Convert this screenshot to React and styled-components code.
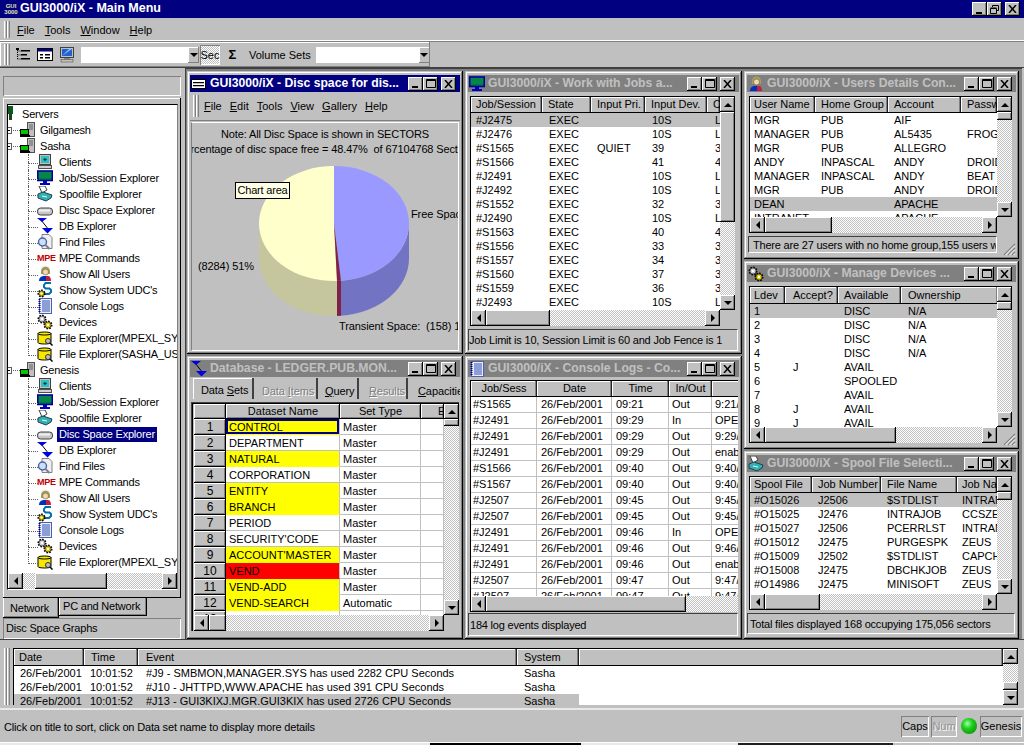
import React from 'react';
import styled, { createGlobalStyle } from 'styled-components';

const GlobalStyle = createGlobalStyle`
  html, body { margin: 0; padding: 0; background: #c0c0c0; }
  body { font-family: "Liberation Sans", Arial, sans-serif; font-size: 11px; color: #000; }
  * { box-sizing: border-box; }
`;

const raised = `box-shadow: inset -1px -1px #000, inset 1px 1px #fff, inset -2px -2px #808080;`;
const checker = `background: repeating-conic-gradient(#c0c0c0 0 25%, #fff 0 50%) 0 0 / 2px 2px;`;

/* ---------- icons ---------- */

function Gear({ x, y, r, fill }) {
  return (
    <g>
      <circle cx={x} cy={y} r={r} fill="none" stroke="#000" strokeWidth="2" strokeDasharray="1.5 1.2" />
      <circle cx={x} cy={y} r={r - 0.4} fill={fill} stroke="#000" strokeWidth="0.6" />
      <circle cx={x} cy={y} r={r / 3} fill="#fff" />
    </g>
  );
}

const drawings = {
  root: (
    <g>
      <rect x="0" y="0" width="5" height="8" fill="#0a5a20" />
      <rect x="1" y="8" width="3" height="6" fill="#204020" />
    </g>
  ),
  server: (
    <g>
      <rect x="7.5" y="0.5" width="7" height="14" fill="#c0c0c0" stroke="#505050" />
      <path d="M9 3h4M9 5h4M9 7h4" stroke="#606060" />
      <rect x="0.5" y="7.5" width="8" height="5" fill="#00c800" stroke="#000" />
      <rect x="0" y="13" width="10" height="2" fill="#000" />
    </g>
  ),
  clients: (
    <g>
      <rect x="2.5" y="0.5" width="11" height="10" fill="#c0c0c0" stroke="#404040" />
      <rect x="4" y="2" width="8" height="7" fill="#30c0c0" />
      <path d="M8 4l2 1.500-2 1.500-2-1.500z" fill="#004040" />
      <rect x="1.500" y="11.500" width="13" height="3" fill="#d0d0d0" stroke="#505050" />
    </g>
  ),
  job: (
    <g>
      <rect x="0.800" y="1" width="14.400" height="9.500" fill="#007840" stroke="#0000a0" strokeWidth="1.600" />
      <path d="M1.500 3h13M1.500 5h13M1.500 7h13" stroke="#10a060" strokeWidth="0.700" />
      <rect x="6" y="11" width="4" height="2" fill="#0000c0" />
      <rect x="3" y="13" width="10" height="2" fill="#0000c0" />
    </g>
  ),
  spool: (
    <g>
      <path d="M2 0h6l2 4-5 3z" fill="#fff" stroke="#404040" />
      <path d="M1 8l5-2 9 3-1 3-5 3-8-3z" fill="#30b0b0" stroke="#204050" />
      <path d="M5 10l5 1" stroke="#e0ffff" />
    </g>
  ),
  disc: (
    <g>
      <rect x="0.500" y="6" width="15" height="7" rx="3" fill="#c8c8c8" stroke="#404040" />
      <rect x="2" y="7.500" width="11" height="2" fill="#f0f0f0" />
    </g>
  ),
  db: (
    <g>
      <path d="M4 2l8 10" stroke="#000" />
      <polygon points="0,0 10,0 5,4" fill="#0000e0" />
      <polygon points="5,10 16,10 10.500,15.500" fill="#0000e0" />
    </g>
  ),
  find: (
    <g>
      <path d="M5 0.500h7l3 3v11H5z" fill="#f0f0f0" stroke="#808080" />
      <circle cx="5.500" cy="8" r="4" fill="#c8e0f8" stroke="#5060a0" strokeWidth="1.400" />
      <path d="M8.500 11l4 4" stroke="#808090" strokeWidth="2" />
    </g>
  ),
  users: (
    <g>
      <path d="M4 5a4.500 4.500 0 1 1 9 0v3H4z" fill="#a8a060" />
      <circle cx="8.500" cy="6" r="3" fill="#f0d8b0" stroke="#504020" strokeWidth="0.500" />
      <path d="M2 15c0-4 3-5 5-5h3l-1 5z" fill="#0030c0" />
      <path d="M9 10h2c2 0 3 2 3 5H9z" fill="#c02040" />
    </g>
  ),
  udc: (
    <g>
      <path d="M14 1H8.500L7 3v2l1.500 1.500h4L14 8v2l-2 2H7" fill="none" stroke="#0070b0" strokeWidth="2" />
      <Gear x={4.500} y={11.500} r={3} fill="#e8d000" />
    </g>
  ),
  logs: (
    <g>
      <rect x="2.500" y="0.500" width="12" height="15" fill="#e8ecff" stroke="#5060a0" />
      <path d="M5 3h8M5 5h8M5 7h8M5 9h8M5 11h8M5 13h8" stroke="#3050b0" />
      <path d="M2.500 1v14" stroke="#000080" strokeDasharray="1 1" strokeWidth="2" />
    </g>
  ),
  devices: (
    <g>
      <Gear x={5} y={5} r={3.500} fill="#d0d0d0" />
      <Gear x={11} y={11} r={3.500} fill="#e8c800" />
    </g>
  ),
  file: (
    <g>
      <path d="M1 3.500c0-2 13-2 13 0v9c0 2-13 2-13 0z" fill="#f8e800" stroke="#000" />
      <path d="M1 3.500c0 2 13 2 13 0" fill="none" stroke="#000" />
      <circle cx="11" cy="11" r="2.500" fill="#c0c0c0" stroke="#303030" />
      <path d="M13 13l2.500 2.500" stroke="#000" strokeWidth="1.500" />
    </g>
  ),
  form: (
    <g>
      <rect x="0.500" y="1.500" width="15" height="12" fill="#fff" stroke="#000" />
      <rect x="1" y="2" width="14" height="2.500" fill="#000080" />
      <path d="M3 7h3v1.500H3zM3 10h3v1.500H3zM8 7h5v1.500H8zM8 10h5v1.500H8z" fill="#000" />
    </g>
  ),
  monitor: (
    <g>
      <rect x="1.500" y="0.500" width="13" height="10" fill="#c0c0c0" stroke="#404040" />
      <rect x="3" y="2" width="10" height="7" fill="#2060d0" />
      <path d="M3 9l7-7h3z" fill="#80c0ff" />
      <rect x="5" y="11" width="6" height="1.500" fill="#808080" />
      <rect x="2" y="12.500" width="12" height="2.500" fill="#c0c0c0" stroke="#404040" strokeWidth="0.500" />
    </g>
  ),
  treeview: (
    <g>
      <path d="M2.500 1v12M2.500 4h3M2.500 8h3M2.500 12h3" stroke="#000" strokeDasharray="1 1" fill="none" />
      <path d="M1 1h3v2H1zM6 3h9v1.500H6zM6 7h6v1.500H6zM6 11h9v1.500H6z" fill="#000" />
    </g>
  ),
  sysmenu: (
    <g>
      <rect x="0.500" y="3.500" width="14" height="9" fill="#fff" stroke="#000" />
      <path d="M2 6h11v1.200H2zM2 9h11v1.200H2z" fill="#000" />
    </g>
  ),
};

const IconSvg = styled.svg`
  display: block;
  flex: none;
`;

function Icon({ name, size = 16 }) {
  return (
    <IconSvg width={size} height={size} viewBox="0 0 16 16">
      {drawings[name]}
    </IconSvg>
  );
}

const MpeMark = styled.span`
  flex: none;
  width: 16px;
  font-size: 9px;
  font-weight: bold;
  color: #c00000;
  text-align: center;
  letter-spacing: -0.2px;
`;

/* ---------- main chrome ---------- */

const Screen = styled.div`
  width: 1024px;
  height: 745px;
  overflow: hidden;
  display: flex;
  flex-direction: column;
  background: #c0c0c0;
`;

const MainTitle = styled.div`
  height: 18px;
  flex: none;
  display: flex;
  align-items: center;
  background: #000080;
  color: #fff;
  font-size: 12.5px;
  font-weight: bold;
  padding-left: 2px;
`;

const LogoMark = styled.span`
  width: 18px;
  font-size: 6px;
  line-height: 6px;
  color: #e8e8b0;
  text-align: center;
  font-weight: bold;
`;

const TitleText = styled.span`
  flex: 1;
  min-width: 0;
  padding-bottom: 2px;
  white-space: nowrap;
  overflow: hidden;
`;

const Controls = styled.div`
  display: flex;
  flex: none;
  margin-right: 4px;
`;

const CtlButton = styled.button`
  width: 15px;
  height: 14px;
  padding: 0;
  border: 0;
  margin-left: ${(p) => (p.$close ? '3px' : '0')};
  background: #c0c0c0;
  display: flex;
  align-items: center;
  justify-content: center;
  ${raised}
`;

function WindowControls({ restore }) {
  return (
    <Controls>
      <CtlButton>
        <svg width="9" height="9" viewBox="0 0 9 9"><rect x="1" y="7" width="6" height="2" /></svg>
      </CtlButton>
      <CtlButton>
        {restore ? (
          <svg width="9" height="9" viewBox="0 0 9 9" fill="none" stroke="#000">
            <path d="M2.500 2V.5h6v5H7" />
            <path d="M.5 3.500h6v5h-6z" />
            <path d="M.5 3h6" />
          </svg>
        ) : (
          <svg width="10" height="9" viewBox="0 0 10 9" fill="none" stroke="#000">
            <path d="M.5 .5h9v8h-9z" />
            <path d="M0 1.500h10" />
          </svg>
        )}
      </CtlButton>
      <CtlButton $close>
        <svg width="9" height="8" viewBox="0 0 9 8" stroke="#000" strokeWidth="1.500">
          <path d="M1 0l7 8M8 0L1 8" />
        </svg>
      </CtlButton>
    </Controls>
  );
}

const Grip = styled.span`
  flex: none;
  width: 6px;
  align-self: stretch;
  background: linear-gradient(90deg, #fff 1px, #c0c0c0 1px, #c0c0c0 2px, #808080 2px) 0 0 / 3px 100%;
`;

const MenuBar = styled.div`
  height: 24px;
  flex: none;
  display: flex;
  align-items: center;
  gap: 10px;
  padding: 3px 0 3px 4px;
  border-bottom: 1px solid #808080;
  box-shadow: inset 0 -1px #fff;
`;

const MenuItem = styled.span`
  margin-left: ${(p) => (p.$first ? '-3px' : '0')};
`;

function Menu({ items }) {
  return items.map((label, i) => (
    <MenuItem key={label} $first={i === 0}>
      <u>{label[0]}</u>
      {label.slice(1)}
    </MenuItem>
  ));
}

const ToolRow = styled.div`
  height: 26px;
  flex: none;
  border-bottom: 1px solid #404040;
`;

const Toolbar = styled.div`
  width: 430px;
  height: 25px;
  display: flex;
  align-items: center;
  gap: 5px;
  padding: 2px 0 2px 4px;
  box-shadow: inset -1px -1px #808080, inset 1px 1px #fff;
`;

const ToolIcon = styled.span`
  width: 17px;
`;

const Combo = styled.div`
  width: ${(p) => p.$width}px;
  height: 16px;
  flex: none;
  background: #fff;
  display: flex;
  justify-content: flex-end;
`;

const ComboArrow = styled.span`
  width: 11px;
  background: #c0c0c0;
  display: flex;
  align-items: center;
  justify-content: center;
  box-shadow: inset -1px -1px #808080, inset 1px 1px #fff;
`;

const SecButton = styled.span`
  width: 20px;
  height: 20px;
  margin-left: -4px;
  display: flex;
  align-items: center;
  justify-content: center;
  ${checker}
  box-shadow: inset 1px 1px #808080, inset -1px -1px #fff;
`;

const SigmaMark = styled.span`
  width: 15px;
  font-size: 13px;
  font-weight: bold;
  text-align: center;
`;

const VolumeLabel = styled.span`
  margin-left: 4px;
  white-space: nowrap;
`;

const Triangle = styled.span`
  width: 0;
  height: 0;
  border-style: solid;
  border-color: transparent;
  ${(p) => p.$dir === 'up' && 'border-width: 0 4px 4px; border-bottom-color: #000;'}
  ${(p) => p.$dir === 'down' && 'border-width: 4px 4px 0; border-top-color: #000;'}
  ${(p) => p.$dir === 'left' && 'border-width: 4px 4px 4px 0; border-right-color: #000;'}
  ${(p) => p.$dir === 'right' && 'border-width: 4px 0 4px 4px; border-left-color: #000;'}
`;

/* ---------- scrollbars ---------- */

const VTrack = styled.div`
  display: flex;
  flex-direction: column;
  min-height: 0;
  overflow: hidden;
`;

const HTrack = styled.div`
  display: flex;
  min-width: 0;
  overflow: hidden;
`;

const ScrollBtn = styled.span`
  flex: none;
  width: 15px;
  height: 15px;
  background: #c0c0c0;
  display: flex;
  align-items: center;
  justify-content: center;
  ${raised}
`;

const HScrollBtn = styled(ScrollBtn)`
  height: 100%;
`;

const Checker = styled.div`
  flex: 1;
  min-width: 0;
  min-height: 0;
  ${checker}
`;

const VThumb = styled.div`
  flex: none;
  height: ${(p) => p.$size}px;
  margin-top: ${(p) => p.$before}px;
  background: #c0c0c0;
  ${raised}
`;

const HThumb = styled.div`
  flex: none;
  width: ${(p) => p.$size}px;
  background: #c0c0c0;
  ${raised}
`;

const CheckerGap = styled.div`
  flex: none;
  width: ${(p) => p.$size}px;
  ${checker}
`;

const VBody = styled.div`
  flex: 1;
  min-height: 0;
  display: flex;
  flex-direction: column;
  ${checker}
`;

function VScroll({ before = 0, size }) {
  return (
    <VTrack>
      <ScrollBtn><Triangle $dir="up" /></ScrollBtn>
      <VBody>
        <VThumb $before={before} $size={size} />
      </VBody>
      <ScrollBtn><Triangle $dir="down" /></ScrollBtn>
    </VTrack>
  );
}

function HScroll({ before = 0, size, noEnd }) {
  return (
    <HTrack>
      <HScrollBtn><Triangle $dir="left" /></HScrollBtn>
      {before > 0 && <CheckerGap $size={before} />}
      <HThumb $size={size} />
      <Checker />
      {!noEnd && <HScrollBtn><Triangle $dir="right" /></HScrollBtn>}
    </HTrack>
  );
}

const HScrollHolder = styled.div`
  flex: none;
  height: 16px;
  display: grid;
`;

/* ---------- list views ---------- */

const ListFrame = styled.div`
  flex: 1;
  min-height: 0;
  margin: ${(p) => p.$margin};
  display: grid;
  grid-template-columns: minmax(0, 1fr) ${(p) => (p.$noV ? '' : '15px')};
  grid-template-rows: minmax(0, 1fr) ${(p) => (p.$noH ? '' : '16px')};
  border-top: 1px solid #000;
  border-left: 1px solid #000;
`;

const ListPane = styled.div`
  background: #fff;
  overflow: hidden;
`;

const HeaderRow = styled.div`
  display: grid;
  grid-template-columns: ${(p) => p.$cols};
  height: ${(p) => p.$height}px;
  border-bottom: 1px solid #000;
`;

const HeaderCell = styled.div`
  background: #c0c0c0;
  white-space: nowrap;
  overflow: hidden;
  padding-left: ${(p) => p.$pad}px;
  line-height: ${(p) => p.$height}px;
  text-align: ${(p) => (p.$center ? 'center' : 'left')};
  box-shadow: inset -1px 0 #202020, inset -2px 0 #808080, inset 1px 1px #fff;
`;

const ListRow = styled.div`
  display: grid;
  grid-template-columns: ${(p) => p.$cols};
  height: ${(p) => p.$height}px;
`;

const ListCell = styled.div`
  white-space: nowrap;
  overflow: hidden;
  padding-left: ${(p) => p.$pad}px;
  line-height: ${(p) => p.$height - (p.$lines ? 1 : 0)}px;
  background: ${(p) => (p.$selected ? '#c0c0c0' : 'transparent')};
  ${(p) => p.$lines && 'border-right: 1px solid #c0c0c0; border-bottom: 1px solid #c0c0c0;'}
`;

const CornerFill = styled.div`
  background: #c0c0c0;
`;

function DataList({
  cols,
  rows,
  selected = -1,
  rowH = 14,
  headH = 16,
  lines,
  centerHead,
  v,
  h,
  margin = '4px 4px 0 2px',
}) {
  const template = cols.map((c) => `${c.w}px`).join(' ') + ' minmax(0, 1fr)';
  return (
    <ListFrame $margin={margin} $noV={!v} $noH={!h}>
      <ListPane>
        <HeaderRow $cols={template} $height={headH}>
          {cols.map((c, i) => (
            <HeaderCell
              key={i}
              $height={headH - 1}
              $pad={centerHead ? 0 : c.headPad ?? c.pad ?? 6}
              $center={centerHead}
            >
              {c.title}
            </HeaderCell>
          ))}
          <HeaderCell $height={headH - 1} $pad={0} />
        </HeaderRow>
        {rows.map((row, r) => (
          <ListRow key={r} $cols={template} $height={rowH}>
            {row.map((text, c) => (
              <ListCell
                key={c}
                $height={rowH}
                $pad={cols[c].pad ?? 6}
                $lines={lines}
                $selected={r === selected}
              >
                {text}
              </ListCell>
            ))}
          </ListRow>
        ))}
      </ListPane>
      {v && <VScroll before={v.before} size={v.size} />}
      {h && <HScroll before={h.before} size={h.size} noEnd={h.noEnd} />}
      {h && v && <CornerFill />}
    </ListFrame>
  );
}

const StatusRow = styled.div`
  flex: none;
  margin: ${(p) => p.$margin};
  height: ${(p) => p.$height}px;
  display: flex;
`;

const StatusBox = styled.div`
  flex: 1;
  min-width: 0;
  border-top: 1px solid #404040;
  border-left: 1px solid #404040;
  border-bottom: 1px solid #fff;
  border-right: 1px solid #fff;
  white-space: nowrap;
  overflow: hidden;
  display: flex;
  align-items: center;
  letter-spacing: -0.2px;
  padding-left: ${(p) => p.$pad}px;
`;

const GripSpace = styled.div`
  flex: none;
  width: 19px;
`;

const ResizeGrip = styled.svg`
  position: absolute;
  right: 3px;
  bottom: 3px;
`;

function CornerGrip() {
  return (
    <ResizeGrip width="13" height="13" viewBox="0 0 13 13">
      <path d="M12 1L1 12M12 5l-7 7M12 9l-3 3" stroke="#808080" strokeWidth="1.200" />
      <path d="M12 2.500L2.500 12M12 6.500L6.500 12M12 10.500L10.500 12" stroke="#fff" />
    </ResizeGrip>
  );
}

/* ---------- MDI windows ---------- */

const Mdi = styled.div`
  flex: 1;
  min-width: 0;
  margin-right: 2px;
  padding: 3px 0 0 2px;
  background: #808080;
  display: grid;
  grid-template-columns: 276px 277px 275px;
  column-gap: 2px;
  align-items: start;
  box-shadow: inset 1px 1px #404040;
`;

const WinColumn = styled.div`
  display: flex;
  flex-direction: column;
  gap: 2px;
`;

const Window = styled.div`
  position: relative;
  height: ${(p) => p.$height}px;
  display: flex;
  flex-direction: column;
  padding: 4px 3px 3px;
  background: #c0c0c0;
  box-shadow: inset -1px -1px #000, inset 1px 1px #c0c0c0, inset -2px -2px #808080, inset 2px 2px #fff;
`;

const WinTitle = styled.div`
  flex: none;
  height: 17px;
  display: flex;
  align-items: center;
  gap: 3px;
  padding-left: 1px;
  background: ${(p) => (p.$active ? '#000080' : '#808080')};
  color: ${(p) => (p.$active ? '#fff' : '#c0c0c0')};
  font-size: 12.2px;
  font-weight: bold;
`;

function TitleBar({ icon, text, active }) {
  return (
    <WinTitle $active={active}>
      <Icon name={icon} />
      <TitleText>{text}</TitleText>
      <WindowControls />
    </WinTitle>
  );
}

/* chart window */

const ChartMenu = styled.div`
  flex: none;
  height: 29px;
  display: flex;
  align-items: center;
  gap: 8px;
  padding: 3px 0 3px 3px;
  border-bottom: 1px solid #808080;
`;

const ChartBody = styled.div`
  flex: 1;
  min-height: 0;
  display: flex;
  flex-direction: column;
  padding-top: 4px;
  margin: 1px 1px 0;
  overflow: hidden;
  border-top: 1px solid #fff;
  border-bottom: 1px solid #fff;
  border-left: 1px solid #808080;
  border-right: 1px solid #fff;
`;

const NoteLine = styled.div`
  flex: none;
  height: 15px;
  line-height: 15px;
  display: flex;
  justify-content: center;
  white-space: pre;
  letter-spacing: -0.13px;
`;

const ChartCanvas = styled.div`
  position: relative;
  flex: 1;
  min-height: 0;
  margin-top: 1px;
  overflow: hidden;
`;

const ChartLabel = styled.span`
  position: absolute;
  left: ${(p) => p.$left}px;
  top: ${(p) => p.$top}px;
  white-space: pre;
  line-height: 14px;
  letter-spacing: -0.1px;
`;

const ChartTip = styled.span`
  position: absolute;
  left: 43px;
  top: 24px;
  width: 55px;
  height: 17px;
  line-height: 15px;
  text-align: center;
  background: #ffffe8;
  border: 1px solid #000;
  letter-spacing: -0.2px;
`;

function PieChart() {
  return (
    <svg width="266" height="190" viewBox="0 0 266 190">
      <path d="M67 65.500V100.500A75 57.500 0 0 0 145 158V123A75 57.500 0 0 1 67 65.500Z" fill="#c6c69e" />
      <path d="M145 123V158L149 157.800V122.800Z" fill="#7f2346" />
      <path d="M149 122.800V157.800A75 57.500 0 0 0 217 100.500V65.500A75 57.500 0 0 1 149 122.800Z" fill="#7373c4" />
      <path d="M142 65.500L142 8A75 57.500 0 0 0 67 65.500A75 57.500 0 0 0 145 123Z" fill="#ffffcc" />
      <path d="M142 65.500L142 8A75 57.500 0 0 1 217 65.500A75 57.500 0 0 1 149 122.800Z" fill="#9999ff" />
      <path d="M142 65.500L145 123L149 122.800Z" fill="#7f2346" />
    </svg>
  );
}

/* database window */

const TabStrip = styled.div`
  flex: none;
  height: 21px;
  margin-top: 1px;
  display: flex;
  padding-left: 3px;
  overflow: hidden;
`;

const DbTab = styled.span`
  flex: none;
  width: ${(p) => p.$width}px;
  padding-left: ${(p) => p.$pad}px;
  line-height: ${(p) => (p.$active ? 24 : 26)}px;
  white-space: nowrap;
  letter-spacing: -0.1px;
  color: ${(p) => (p.$disabled ? '#808080' : '#000')};
  ${(p) => p.$disabled && 'text-shadow: 1px 1px #fff;'}
  border-right: 2px solid #404040;
  ${(p) => p.$active && 'box-shadow: inset 1px 1px #fff;'}
`;

const GridFrame = styled.div`
  flex: 1;
  min-height: 0;
  margin: 3px 1px 5px 1px;
  display: grid;
  grid-template-columns: minmax(0, 1fr) 15px;
  grid-template-rows: minmax(0, 1fr) 16px;
  border-top: 1px solid #404040;
  border-left: 1px solid #404040;
  box-shadow: inset 1px 1px #000;
  padding: 1px 0 0 2px;
`;

const GridPane = styled.div`
  overflow: hidden;
  background: #fff;
`;

const GridRow = styled.div`
  display: grid;
  grid-template-columns: 32px 114px 81px minmax(0, 1fr);
  height: ${(p) => (p.$head ? 15 : 16)}px;
`;

const GridHead = styled.div`
  background: #c0c0c0;
  text-align: center;
  line-height: 15px;
  white-space: nowrap;
  overflow: hidden;
  ${raised}
`;

const ClippedHead = styled(GridHead)`
  text-align: left;
  padding-left: 17px;
`;

const RowNumber = styled(GridHead)`
  font-size: 12px;
  line-height: 17px;
`;

const GridCell = styled.div`
  padding-left: 3px;
  line-height: 16px;
  white-space: nowrap;
  overflow: hidden;
  background: ${(p) => p.$fill || '#fff'};
  border-right: 1px solid #c0c0c0;
  border-bottom: 1px solid ${(p) => (p.$fill ? p.$fill : '#c0c0c0')};
  ${(p) => p.$focus && 'box-shadow: inset 0 0 0 2px #000080;'}
`;

const datasets = [
  ['CONTROL', 'Master', '#ffff00'],
  ['DEPARTMENT', 'Master'],
  ['NATURAL', 'Master', '#ffff00'],
  ['CORPORATION', 'Master'],
  ['ENTITY', 'Master', '#ffff00'],
  ['BRANCH', 'Master', '#ffff00'],
  ['PERIOD', 'Master'],
  ["SECURITY'CODE", 'Master'],
  ["ACCOUNT'MASTER", 'Master', '#ffff00'],
  ['VEND', 'Master', '#ff0000'],
  ['VEND-ADD', 'Master', '#ffff00'],
  ['VEND-SEARCH', 'Automatic', '#ffff00'],
  ['VEND-VEND-SEARCH', 'Detail'],
];

/* ---------- left pane ---------- */

const LeftPane = styled.div`
  flex: none;
  width: 185px;
  display: flex;
  flex-direction: column;
  padding: 8px 4px 1px 3px;
`;

const PaneHeader = styled.div`
  flex: none;
  height: 20px;
  box-shadow: inset 1px 1px #808080, inset -1px -1px #fff;
`;

const TabPage = styled.div`
  flex: none;
  height: 500px;
  margin-top: 2px;
  padding: 6px 3px 8px 4px;
  display: flex;
  box-shadow: inset -1px -1px #000, inset 1px 1px #fff;
`;

const TreeBox = styled.div`
  flex: 1;
  min-width: 0;
  display: flex;
  flex-direction: column;
  border-top: 1px solid #000;
  border-left: 1px solid #000;
  border-bottom: 1px solid #fff;
  border-right: 1px solid #808080;
  background: #fff;
`;

const TreeScroll = styled.div`
  flex: 1;
  min-height: 0;
  overflow: hidden;
  padding-top: 1px;
`;

const TreeRow = styled.div`
  position: relative;
  height: 16px;
  display: flex;
  align-items: center;
  white-space: nowrap;
  padding-left: ${(p) => [0, 12, 29][p.$depth]}px;
  ${(p) =>
    p.$depth === 1 &&
    `&::before {
      content: '';
      position: absolute;
      left: 3px;
      top: 8px;
      width: 9px;
      border-top: 1px dotted #606060;
    }`}
  ${(p) =>
    p.$depth === 2 &&
    `&::before {
      content: '';
      position: absolute;
      left: 20px;
      top: 0;
      width: 9px;
      height: 9px;
      border-left: 1px dotted #606060;
      border-bottom: 1px dotted #606060;
    }`}
  ${(p) =>
    p.$depth === 2 &&
    !p.$last &&
    `&::after {
      content: '';
      position: absolute;
      left: 20px;
      top: 8px;
      height: 8px;
      border-left: 1px dotted #606060;
    }`}
`;

const Expander = styled.span`
  position: absolute;
  left: 0;
  top: 5px;
  width: 4px;
  height: 7px;
  background: #fff;
  border: 1px solid #606060;
  border-left: 0;
  &::after {
    content: '';
    position: absolute;
    left: 0;
    top: 2px;
    width: 2px;
    border-top: 1px solid #000;
  }
`;

const RootIcon = styled.span`
  width: 6px;
  flex: none;
  overflow: hidden;
`;

const TreeLabel = styled.span`
  position: relative;
  height: 15px;
  line-height: 14px;
  padding: 0 2px;
  letter-spacing: -0.2px;
  margin-left: ${(p) => [6, 2, 4][p.$depth]}px;
  background: ${(p) => (p.$selected ? '#000080' : 'transparent')};
  color: ${(p) => (p.$selected ? '#fff' : '#000')};
`;

const BottomTabs = styled.div`
  flex: none;
  height: 20px;
  display: flex;
  align-items: flex-start;
`;

const BottomTab = styled.span`
  flex: none;
  width: ${(p) => p.$width}px;
  height: ${(p) => (p.$active ? 20 : 18)}px;
  padding-left: ${(p) => (p.$active ? 7 : 4)}px;
  line-height: ${(p) => (p.$active ? 20 : 16)}px;
  letter-spacing: -0.2px;
  box-shadow: inset -1px -1px #000, inset 1px 0 #fff, inset -2px -2px #808080;
`;

const PaneStatus = styled.div`
  flex: none;
  height: 21px;
  padding-left: 3px;
  line-height: 20px;
  letter-spacing: -0.2px;
  box-shadow: inset 1px 1px #808080, inset -1px -1px #fff;
`;

const children = (file, selected) => [
  ['clients', 'Clients'],
  ['job', 'Job/Session Explorer'],
  ['spool', 'Spoolfile Explorer'],
  ['disc', 'Disc Space Explorer', selected],
  ['db', 'DB Explorer'],
  ['find', 'Find Files'],
  ['mpe', 'MPE Commands'],
  ['users', 'Show All Users'],
  ['udc', "Show System UDC's"],
  ['logs', 'Console Logs'],
  ['devices', 'Devices'],
  ...file.map((f) => ['file', `File Explorer(${f})`]),
];

function TreeBranch({ name, open, items }) {
  return (
    <>
      <TreeRow $depth={1}>
        <Expander />
        <Icon name="server" />
        <TreeLabel $depth={1}>{name}</TreeLabel>
      </TreeRow>
      {open &&
        items.map(([icon, label, sel], i) => (
          <TreeRow key={label} $depth={2} $last={i === items.length - 1}>
            {icon === 'mpe' ? <MpeMark>MPE</MpeMark> : <Icon name={icon} />}
            <TreeLabel $depth={2} $selected={sel}>{label}</TreeLabel>
          </TreeRow>
        ))}
    </>
  );
}

/* ---------- log panel and status bar ---------- */

const LogPanel = styled.div`
  flex: none;
  height: 71px;
  display: flex;
  padding: 8px 6px 3px 4px;
  border-top: 1px solid #404040;
  border-bottom: 2px solid #e8e8e8;
  gap: 3px;
`;

const StatusBar = styled.div`
  flex: 1;
  min-height: 0;
  display: flex;
  align-items: center;
  padding: 0 2px 0 4px;
  gap: 2px;
`;

const StatusText = styled.span`
  flex: 1;
  white-space: nowrap;
  letter-spacing: -0.17px;
  padding-top: 2px;
`;

const StatusPanel = styled.span`
  flex: none;
  width: ${(p) => p.$width}px;
  height: 21px;
  line-height: 20px;
  text-align: center;
  color: ${(p) => (p.$off ? '#909090' : '#000')};
  ${(p) => p.$off && 'text-shadow: 1px 1px #fff;'}
  box-shadow: inset 1px 1px #808080, inset -1px -1px #fff;
`;

const GreenBall = styled.span`
  flex: none;
  width: 16px;
  height: 16px;
  margin: 0 1px 0 2px;
  border-radius: 50%;
  background: radial-gradient(circle at 40% 35%, #a0ffa0 0, #20d020 35%, #008000 100%);
`;

const TaskStrip = styled.div`
  flex: none;
  height: 3px;
  display: flex;
  border-top: 1px solid #fff;
`;

const TaskSegment = styled.span`
  width: ${(p) => p.$width}px;
  background: ${(p) => p.$color};
`;

/* ---------- data ---------- */

const jobCols = [
  { title: 'Job/Session', w: 71, pad: 5 },
  { title: 'State', w: 49, pad: 7, headPad: 6 },
  { title: 'Input Pri.', w: 54 },
  { title: 'Input Dev.', w: 62, pad: 7, headPad: 6 },
  { title: 'C', w: 13, pad: 8, headPad: 6 },
];
const jobRows = [
  ['#J2475', 'EXEC', '', '10S', 'L'],
  ['#J2476', 'EXEC', '', '10S', 'L'],
  ['#S1565', 'EXEC', 'QUIET', '39', '3'],
  ['#S1566', 'EXEC', '', '41', '4'],
  ['#J2491', 'EXEC', '', '10S', 'L'],
  ['#J2492', 'EXEC', '', '10S', 'L'],
  ['#S1552', 'EXEC', '', '32', '3'],
  ['#J2490', 'EXEC', '', '10S', 'L'],
  ['#S1563', 'EXEC', '', '40', '4'],
  ['#S1556', 'EXEC', '', '33', '3'],
  ['#S1557', 'EXEC', '', '34', '3'],
  ['#S1560', 'EXEC', '', '37', '3'],
  ['#S1559', 'EXEC', '', '36', '3'],
  ['#J2493', 'EXEC', '', '10S', 'L'],
];

const consoleCols = [
  { title: 'Job/Sess', w: 66, pad: 2 },
  { title: 'Date', w: 75, pad: 4 },
  { title: 'Time', w: 57, pad: 4 },
  { title: 'In/Out', w: 43, pad: 3 },
  { title: '', w: 30, pad: 3 },
];
const consoleLog = (job, time, dir, msg) => [job, '26/Feb/2001', time, dir, msg];
const consoleRows = [
  consoleLog('#S1565', '09:21', 'Out', '9:21/FEB'),
  consoleLog('#J2491', '09:29', 'In', 'OPENQ'),
  consoleLog('#J2491', '09:29', 'Out', '9:29/FEB'),
  consoleLog('#J2491', '09:29', 'Out', 'enable'),
  consoleLog('#S1566', '09:40', 'Out', '9:40/FEB'),
  consoleLog('#S1567', '09:40', 'Out', '9:40/FEB'),
  consoleLog('#J2507', '09:45', 'Out', '9:45/FEB'),
  consoleLog('#J2507', '09:45', 'Out', '9:45/FEB'),
  consoleLog('#J2491', '09:46', 'In', 'OPENQ'),
  consoleLog('#J2491', '09:46', 'Out', '9:46/FEB'),
  consoleLog('#J2491', '09:46', 'Out', 'enable'),
  consoleLog('#J2507', '09:47', 'Out', '9:47/FEB'),
  consoleLog('#J2507', '09:47', 'Out', '9:47/FEB'),
];

const userCols = [
  { title: 'User Name', w: 65, pad: 4 },
  { title: 'Home Group', w: 73 },
  { title: 'Account', w: 73 },
  { title: 'Password', w: 36 },
];
const userRows = [
  ['MGR', 'PUB', 'AIF', ''],
  ['MANAGER', 'PUB', 'AL5435', 'FROG'],
  ['MGR', 'PUB', 'ALLEGRO', ''],
  ['ANDY', 'INPASCAL', 'ANDY', 'DROID'],
  ['MANAGER', 'INPASCAL', 'ANDY', 'BEAT'],
  ['MGR', 'PUB', 'ANDY', 'DROID'],
  ['DEAN', '', 'APACHE', ''],
  ['INTRANET', '', 'APACHE', ''],
];

const deviceCols = [
  { title: 'Ldev', w: 35, pad: 4 },
  { title: 'Accept?', w: 53, pad: 8 },
  { title: 'Available', w: 63 },
  { title: 'Ownership', w: 97, pad: 7 },
];
const deviceRows = [
  ['1', '', 'DISC', 'N/A'],
  ['2', '', 'DISC', 'N/A'],
  ['3', '', 'DISC', 'N/A'],
  ['4', '', 'DISC', 'N/A'],
  ['5', 'J', 'AVAIL', ''],
  ['6', '', 'SPOOLED', ''],
  ['7', '', 'AVAIL', ''],
  ['8', 'J', 'AVAIL', ''],
  ['9', 'J', 'AVAIL', ''],
];

const spoolCols = [
  { title: 'Spool File', w: 62, pad: 4 },
  { title: 'Job Number', w: 69 },
  { title: 'File Name', w: 76 },
  { title: 'Job Name', w: 40, pad: 5 },
];
const spoolRows = [
  ['#O15026', 'J2506', '$STDLIST', 'INTRANET'],
  ['#O15025', 'J2476', 'INTRAJOB', 'CCSZEUS'],
  ['#O15027', 'J2506', 'PCERRLST', 'INTRANET'],
  ['#O15012', 'J2475', 'PURGESPK', 'ZEUS'],
  ['#O15009', 'J2502', '$STDLIST', 'CAPCHECK'],
  ['#O15008', 'J2475', 'DBCHKJOB', 'ZEUS'],
  ['#O14986', 'J2475', 'MINISOFT', 'ZEUS'],
];

const logCols = [
  { title: 'Date', w: 70, pad: 6, headPad: 5 },
  { title: 'Time', w: 54, pad: 6, headPad: 7 },
  { title: 'Event', w: 379, pad: 8 },
  { title: 'System', w: 62, pad: 7 },
];
const logRows = [
  ['26/Feb/2001', '10:01:52', '#J9 - SMBMON,MANAGER.SYS has used 2282 CPU Seconds', 'Sasha'],
  ['26/Feb/2001', '10:01:52', '#J10 - JHTTPD,WWW.APACHE has used 391 CPU Seconds', 'Sasha'],
  ['26/Feb/2001', '10:01:52', '#J13 - GUI3KIXJ.MGR.GUI3KIX has used 2726 CPU Seconds', 'Sasha'],
];

const Workspace = styled.div`
  flex: none;
  height: 571px;
  display: flex;
`;

export default function App() {
  return (
    <Screen>
      <GlobalStyle />
      <MainTitle>
        <LogoMark>GUI<br />3000</LogoMark>
        <TitleText>GUI3000/iX - Main Menu</TitleText>
        <WindowControls restore />
      </MainTitle>

      <MenuBar>
        <Grip />
        <Menu items={['File', 'Tools', 'Window', 'Help']} />
      </MenuBar>

      <ToolRow>
        <Toolbar>
          <Grip />
          <ToolIcon><Icon name="treeview" /></ToolIcon>
          <ToolIcon><Icon name="form" /></ToolIcon>
          <ToolIcon><Icon name="monitor" /></ToolIcon>
          <Combo $width={118}><ComboArrow><Triangle $dir="down" /></ComboArrow></Combo>
          <SecButton>Sec</SecButton>
          <SigmaMark>Σ</SigmaMark>
          <VolumeLabel>Volume Sets</VolumeLabel>
          <Combo $width={114}><ComboArrow><Triangle $dir="down" /></ComboArrow></Combo>
        </Toolbar>
      </ToolRow>

      <Workspace>
        <LeftPane>
          <PaneHeader />
          <TabPage>
            <TreeBox>
              <TreeScroll>
                <TreeRow $depth={0}>
                  <RootIcon><Icon name="root" /></RootIcon>
                  <TreeLabel $depth={0}>Servers</TreeLabel>
                </TreeRow>
                <TreeBranch name="Gilgamesh" />
                <TreeBranch name="Sasha" open items={children(['MPEXL_SYSTEM_VOLUME_SET', 'SASHA_USER_SET'])} />
                <TreeBranch name="Genesis" open items={children(['MPEXL_SYSTEM_VOLUME_SET'], true)} />
              </TreeScroll>
              <HScrollHolder><HScroll before={12} size={72} /></HScrollHolder>
            </TreeBox>
          </TabPage>
          <BottomTabs>
            <BottomTab $active $width={56}>Network</BottomTab>
            <BottomTab $width={88}>PC and Network</BottomTab>
          </BottomTabs>
          <PaneStatus>Disc Space Graphs</PaneStatus>
        </LeftPane>

        <Mdi>
          <WinColumn>
            <Window $height={283}>
              <TitleBar active icon="sysmenu" text="GUI3000/iX - Disc space for dis..." />
              <ChartMenu>
                <Grip />
                <Menu items={['File', 'Edit', 'Tools', 'View', 'Gallery', 'Help']} />
              </ChartMenu>
              <ChartBody>
                <NoteLine>Note: All Disc Space is shown in SECTORS</NoteLine>
                <NoteLine>{'Percentage of disc space free = 48.47%  of 67104768 Sectors'}</NoteLine>
                <ChartCanvas>
                  <PieChart />
                  <ChartTip>Chart area</ChartTip>
                  <ChartLabel $left={219} $top={49}>Free Space:  (7908) 48%</ChartLabel>
                  <ChartLabel $left={6} $top={101}>(8284) 51%</ChartLabel>
                  <ChartLabel $left={147} $top={161}>{'Transient Space:  (158) 1%'}</ChartLabel>
                </ChartCanvas>
              </ChartBody>
            </Window>

            <Window $height={283}>
              <TitleBar icon="db" text="Database - LEDGER.PUB.MON..." />
              <TabStrip>
                <DbTab $active $width={61} $pad={8}>Data <u>S</u>ets</DbTab>
                <DbTab $disabled $width={64} $pad={8}>Data <u>I</u>tems</DbTab>
                <DbTab $width={41} $pad={7}><u>Q</u>uery</DbTab>
                <DbTab $disabled $width={49} $pad={10}><u>R</u>esults</DbTab>
                <DbTab $width={60} $pad={10}><u>C</u>apacities</DbTab>
              </TabStrip>
              <GridFrame>
                <GridPane>
                  <GridRow $head>
                    <GridHead />
                    <GridHead>Dataset Name</GridHead>
                    <GridHead>Set Type</GridHead>
                    <ClippedHead>Entries</ClippedHead>
                  </GridRow>
                  {datasets.map(([name, type, fill], i) => (
                    <GridRow key={name}>
                      <RowNumber>{i + 1}</RowNumber>
                      <GridCell $fill={fill} $focus={i === 0}>{name}</GridCell>
                      <GridCell>{type}</GridCell>
                      <GridCell />
                    </GridRow>
                  ))}
                </GridPane>
                <VScroll size={7} />
                <HScroll size={17} />
                <CornerFill />
              </GridFrame>
            </Window>
          </WinColumn>

          <WinColumn>
            <Window $height={283}>
              <TitleBar icon="job" text="GUI3000/iX - Work with Jobs a..." />
              <DataList cols={jobCols} rows={jobRows} selected={0} v={{ size: 110 }} h={{ size: 64 }} />
              <StatusRow $height={22} $margin="3px 1px 0 0">
                <StatusBox $pad={0}>Job Limit is 10, Session Limit is 60 and Job Fence is 1</StatusBox>
              </StatusRow>
            </Window>

            <Window $height={283}>
              <TitleBar icon="logs" text="GUI3000/iX - Console Logs - Co..." />
              <DataList
                cols={consoleCols}
                rows={consoleRows}
                rowH={16}
                lines
                centerHead
                margin="3px 1px 0 2px"
                h={{ size: 200, noEnd: true }}
              />
              <StatusRow $height={23} $margin="1px 1px 0 0">
                <StatusBox $pad={1}>184 log events displayed</StatusBox>
              </StatusRow>
            </Window>
          </WinColumn>

          <WinColumn>
            <Window $height={188}>
              <TitleBar icon="users" text="GUI3000/iX - Users Details Con..." />
              <DataList cols={userCols} rows={userRows} selected={6} v={{ size: 8 }} h={{ size: 67 }} />
              <StatusRow $height={17} $margin="3px 0 3px 1px">
                <StatusBox $pad={4}>There are 27 users with no home group,155 users with</StatusBox>
                <GripSpace />
              </StatusRow>
              <CornerGrip />
            </Window>

            <Window $height={188}>
              <TitleBar icon="devices" text="GUI3000/iX - Manage Devices ..." />
              <DataList
                cols={deviceCols}
                rows={deviceRows}
                selected={0}
                headH={17}
                margin="4px 4px 3px 2px"
                v={{ size: 8 }}
                h={{ size: 131 }}
              />
              <CornerGrip />
            </Window>

            <Window $height={188}>
              <TitleBar icon="spool" text="GUI3000/iX - Spool File Selecti..." />
              <DataList cols={spoolCols} rows={spoolRows} selected={0} v={{ size: 8 }} h={{ size: 55 }} />
              <StatusRow $height={21} $margin="3px 1px 2px 0">
                <StatusBox $pad={2}>Total files displayed 168 occupying 175,056 sectors</StatusBox>
              </StatusRow>
            </Window>
          </WinColumn>
        </Mdi>
      </Workspace>

      <LogPanel>
        <Grip />
        <DataList
          cols={logCols}
          rows={logRows}
          selected={2}
          headH={17}
          margin="0"
          v={{ before: 18, size: 8 }}
        />
      </LogPanel>

      <StatusBar>
        <StatusText>Click on title to sort, click on Data set name to display more details</StatusText>
        <StatusPanel $width={28}>Caps</StatusPanel>
        <StatusPanel $off $width={26}>Num</StatusPanel>
        <GreenBall />
        <StatusPanel $width={42}>Genesis</StatusPanel>
      </StatusBar>

      <TaskStrip>
        <TaskSegment $width={430} $color="#e8e8e8" />
        <TaskSegment $width={151} $color="#000" />
        <TaskSegment $width={157} $color="#e8e8e8" />
        <TaskSegment $width={155} $color="#202020" />
        <TaskSegment $width={131} $color="#c0c0c0" />
      </TaskStrip>
    </Screen>
  );
}
